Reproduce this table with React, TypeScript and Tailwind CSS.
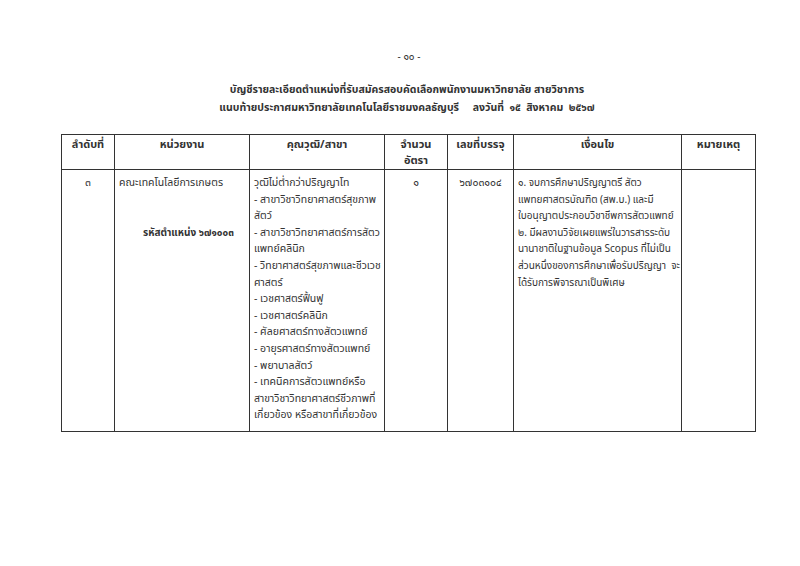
import React from "react";

const qualifications = [
  "วุฒิไม่ต่ำกว่าปริญญาโท",
  "- สาขาวิชาวิทยาศาสตร์สุขภาพ",
  "สัตว์",
  "- สาขาวิชาวิทยาศาสตร์การสัตว",
  "แพทย์คลินิก",
  "- วิทยาศาสตร์สุขภาพและชีวเวช",
  "ศาสตร์",
  "- เวชศาสตร์ฟื้นฟู",
  "- เวชศาสตร์คลินิก",
  "- ศัลยศาสตร์ทางสัตวแพทย์",
  "- อายุรศาสตร์ทางสัตวแพทย์",
  "- พยาบาลสัตว์",
  "- เทคนิคการสัตวแพทย์หรือ",
  "สาขาวิชาวิทยาศาสตร์ชีวภาพที่",
  "เกี่ยวข้อง หรือสาขาที่เกี่ยวข้อง",
];

const conditions = [
  "๑. จบการศึกษาปริญญาตรี สัตว",
  "แพทยศาสตรบัณฑิต (สพ.บ.) และมี",
  "ใบอนุญาตประกอบวิชาชีพการสัตวแพทย์",
  "๒. มีผลงานวิจัยเผยแพร่ในวารสารระดับ",
  "นานาชาติในฐานข้อมูล Scopus ที่ไม่เป็น",
  "ส่วนหนึ่งของการศึกษาเพื่อรับปริญญา\u00a0\u00a0จะ",
  "ได้รับการพิจารณาเป็นพิเศษ",
];

export default function App() {
  const head = "border border-[#333] align-top pt-[2px] text-center font-bold text-[11px] leading-[15px]";
  const cell = "border border-[#333] align-top pt-[5px] pb-[7px]";

  return (
    <div
      className="w-[800px] h-[566px] bg-white text-[#333] overflow-hidden"
      style={{ fontFamily: '"Noto Sans Thai", Loma, Garuda, Waree, "Noto Sans", "DejaVu Sans", sans-serif' }}
    >
      <div className="pt-[49px] pl-[18px] text-center text-[10px] leading-[16px]">- ๑๐ -</div>

      <div className="mt-[16px] pl-[14px] text-center font-bold text-[10.5px] leading-[18px]">
        <div>บัญชีรายละเอียดตำแหน่งที่รับสมัครสอบคัดเลือกพนักงานมหาวิทยาลัย สายวิชาการ</div>
        <div className="whitespace-pre">แนบท้ายประกาศมหาวิทยาลัยเทคโนโลยีราชมงคลธัญบุรี     ลงวันที่  ๑๕  สิงหาคม  ๒๕๖๗</div>
      </div>

      <div className="pl-[61px] mt-[17px]">
        <table className="border-collapse table-fixed w-[695px] text-[10.5px] leading-[16.6px]">
          <colgroup>
            <col className="w-[53px]" />
            <col className="w-[135px]" />
            <col className="w-[135px]" />
            <col className="w-[63px]" />
            <col className="w-[66px]" />
            <col className="w-[168px]" />
            <col className="w-[74px]" />
          </colgroup>
          <thead>
            <tr className="h-[33px]">
              <th className={head}>ลำดับที่</th>
              <th className={head}>หน่วยงาน</th>
              <th className={head}>คุณวุฒิ/สาขา</th>
              <th className={`${head} leading-[16px]`}>
                <div>จำนวน</div>
                <div>อัตรา</div>
              </th>
              <th className={head}>เลขที่บรรจุ</th>
              <th className={head}>เงื่อนไข</th>
              <th className={head}>หมายเหตุ</th>
            </tr>
          </thead>
          <tbody>
            <tr>
              <td className={`${cell} text-center`}>๓</td>
              <td className={`${cell} px-[4px]`}>
                <div className="whitespace-nowrap">คณะเทคโนโลยีการเกษตร</div>
                <div className="h-[33px]" />
                <div className="pl-[24px] font-bold text-[10px] whitespace-nowrap">รหัสตำแหน่ง ๖๗๑๐๐๓</div>
              </td>
              <td className={`${cell} px-[4px]`}>
                {qualifications.map((q) => (
                  <div key={q} className="whitespace-nowrap">{q}</div>
                ))}
              </td>
              <td className={`${cell} text-center`}>๑</td>
              <td className={`${cell} text-center`}>๖๗๐๓๑๐๔</td>
              <td className={`${cell} px-[4px] text-[10px]`}>
                {conditions.map((c) => (
                  <div key={c} className="whitespace-nowrap">{c}</div>
                ))}
              </td>
              <td className={cell}></td>
            </tr>
          </tbody>
        </table>
      </div>
    </div>
  );
}
